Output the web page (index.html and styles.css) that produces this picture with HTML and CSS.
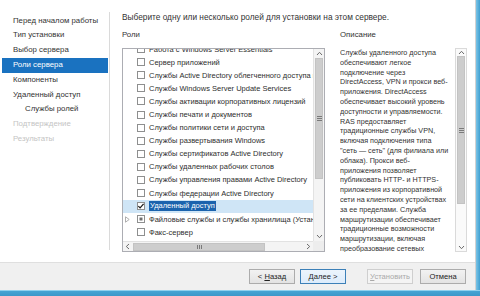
FILE: index.html
```html
<!DOCTYPE html>
<html lang="ru">
<head>
  <meta charset="UTF-8">
  <title>Мастер добавления ролей и компонентов</title>
  <link rel="stylesheet" href="styles.css">
</head>
<body>
<div class="window">
  <div class="frame">
    <div class="main">
      <!-- Steps -->
      <div class="steps">
        <div class="step">Перед началом работы</div>
        <div class="step">Тип установки</div>
        <div class="step">Выбор сервера</div>
        <div class="step active">Роли сервера</div>
        <div class="step">Компоненты</div>
        <div class="step">Удаленный доступ</div>
        <div class="step sub">Службы ролей</div>
        <div class="step disabled">Подтверждение</div>
        <div class="step disabled">Результаты</div>
      </div>

      <!-- Page -->
      <div class="content">
        <p class="intro">Выберите одну или несколько ролей для установки на этом сервере.</p>
        <div class="columns">
          <div class="roles">
            <div class="label">Роли</div>
            <div class="roles-box">
              <div class="roles-list">
                <div class="role first"><span class="check"></span><span class="name">Работа с Windows Server Essentials</span></div>
                <div class="role"><span class="check"></span><span class="name">Сервер приложений</span></div>
                <div class="role"><span class="check"></span><span class="name">Службы Active Directory облегченного доступа к каталогам</span></div>
                <div class="role"><span class="check"></span><span class="name">Службы Windows Server Update Services</span></div>
                <div class="role"><span class="check"></span><span class="name">Службы активации корпоративных лицензий</span></div>
                <div class="role"><span class="check"></span><span class="name">Службы печати и документов</span></div>
                <div class="role"><span class="check"></span><span class="name">Службы политики сети и доступа</span></div>
                <div class="role"><span class="check"></span><span class="name">Службы развертывания Windows</span></div>
                <div class="role"><span class="check"></span><span class="name">Службы сертификатов Active Directory</span></div>
                <div class="role"><span class="check"></span><span class="name">Службы удаленных рабочих столов</span></div>
                <div class="role"><span class="check"></span><span class="name">Службы управления правами Active Directory</span></div>
                <div class="role"><span class="check"></span><span class="name">Службы федерации Active Directory</span></div>
                <div class="role selected">
                  <span class="check">
                    <svg width="8" height="8" viewBox="0 0 8 8"><path d="M1.3 4.1 L3.1 5.9 L6.6 1.9" fill="none" stroke="#1e1e1e" stroke-width="1.3"/></svg>
                  </span>
                  <span class="name">Удаленный доступ</span>
                </div>
                <div class="role has-toggle">
                  <span class="toggle">
                    <svg width="5" height="7" viewBox="0 0 5 7"><path d="M0.5 0.8 L4.2 3.5 L0.5 6.2 Z" fill="none" stroke="#a6a6a6" stroke-width="0.9"/></svg>
                  </span>
                  <span class="check partial"></span><span class="name">Файловые службы и службы хранилища (Установлено: 1 из 12)</span>
                </div>
                <div class="role"><span class="check"></span><span class="name">Факс-сервер</span></div>
              </div>

              <div class="vscroll">
                <div class="sb-btn"><svg width="7" height="5" viewBox="0 0 7 5"><path d="M1 4 L3.5 1.3 L6 4" fill="none" stroke="#6b6b6b" stroke-width="1"/></svg></div>
                <div class="sb-track"><div class="sb-thumb roles-thumb"><span class="grip"></span></div></div>
                <div class="sb-btn down"><svg width="7" height="5" viewBox="0 0 7 5"><path d="M1 1 L3.5 3.7 L6 1" fill="none" stroke="#6b6b6b" stroke-width="1"/></svg></div>
              </div>
              <div class="hscroll">
                <div class="sb-btn"><svg width="5" height="7" viewBox="0 0 5 7"><path d="M4 1 L1.3 3.5 L4 6" fill="none" stroke="#6b6b6b" stroke-width="1"/></svg></div>
                <div class="sb-track"><div class="sb-thumb h-thumb"><span class="grip"></span></div></div>
                <div class="sb-btn right"><svg width="5" height="7" viewBox="0 0 5 7"><path d="M1 1 L3.7 3.5 L1 6" fill="none" stroke="#6b6b6b" stroke-width="1"/></svg></div>
              </div>
              <div class="corner"></div>
            </div>
          </div>

          <div class="desc">
            <div class="label">Описание</div>
            <div class="desc-box">
              <p class="desc-text">Службы удаленного доступа<br>обеспечивают легкое<br>подключение через<br>DirectAccess, VPN и прокси веб-<br>приложения. DirectAccess<br>обеспечивает высокий уровень<br>доступности и управляемости.<br>RAS предоставляет<br>традиционные службы VPN,<br>включая подключения типа<br>"сеть — сеть" (для филиала или<br>облака). Прокси веб-<br>приложения позволяет<br>публиковать HTTP- и HTTPS-<br>приложения из корпоративной<br>сети на клиентских устройствах<br>за ее пределами. Служба<br>маршрутизации обеспечивает<br>традиционные возможности<br>маршрутизации, включая<br>преобразование сетевых<br>адресов (NAT).</p>
              <div class="vscroll desc-scroll">
                <div class="sb-btn"><svg width="7" height="5" viewBox="0 0 7 5"><path d="M1 4 L3.5 1.3 L6 4" fill="none" stroke="#6b6b6b" stroke-width="1"/></svg></div>
                <div class="sb-track"><div class="sb-thumb desc-thumb"><span class="grip"></span></div></div>
                <div class="sb-btn down"><svg width="7" height="5" viewBox="0 0 7 5"><path d="M1 1 L3.5 3.7 L6 1" fill="none" stroke="#6b6b6b" stroke-width="1"/></svg></div>
              </div>
            </div>
          </div>
        </div>
      </div>
    </div>

    <!-- Buttons -->
    <div class="footer">
      <button class="btn">&lt; <u>Н</u>азад</button>
      <button class="btn default"><u>Д</u>алее &gt;</button>
      <button class="btn disabled"><u>У</u>становить</button>
      <button class="btn cancel">Отмена</button>
    </div>
  </div>
  <div class="frame-edge"></div>
</div>
<div class="frame-bottom"></div>
</body>
</html>
```

FILE: styles.css
```css
* {
  margin: 0;
  padding: 0;
  box-sizing: border-box;
}

body {
  width: 480px;
  height: 296px;
  overflow: hidden;
  background: #ffffff;
  font-family: 'Liberation Sans', Arial, sans-serif;
  color: #2b2b2b;
}

/* Window frame */
.window {
  display: flex;
  height: 290px;
}

.frame {
  flex: 1;
  display: flex;
  flex-direction: column;
  border-right: 1px solid #d2d2d2;
}

.frame-edge {
  width: 4px;
  background: linear-gradient(90deg, #7cc4e6, #3f9fd0);
}

.frame-bottom {
  height: 6px;
  background: linear-gradient(#8fd1ee 0, #8fd1ee 1px, #45a4d4 1px, #3b98c9);
}

.main {
  display: flex;
  height: 262px;
}

/* Steps */
.steps {
  width: 110px;
  height: 238px;
  margin-top: 12px;
  padding-top: 1.6px;
  border-right: 1px solid #dadada;
}

.step {
  height: 14.8px;
  line-height: 14.8px;
  margin: 0 1px 0 2px;
  padding-left: 11px;
  font-size: 7.8px;
  color: #333333;
  white-space: nowrap;
}

.step.active {
  background: #1a72c0;
  color: #ffffff;
}

.step.sub {
  padding-left: 23px;
}

.step.disabled {
  color: #c4c4c4;
}

/* Page */
.content {
  flex: 1;
  padding: 12px 0 0 12px;
}

.intro {
  font-size: 8.3px;
  line-height: 10px;
  color: #333333;
  white-space: nowrap;
}

.columns {
  display: flex;
  margin-top: 8px;
}

.label {
  height: 10px;
  line-height: 10px;
  margin-bottom: 8px;
  font-size: 7.8px;
  color: #333333;
}

.roles {
  width: 203px;
}

.roles-box {
  height: 204px;
  border: 1px solid #acadb3;
  display: grid;
  grid-template-columns: 1fr 11px;
  grid-template-rows: 1fr 10px;
}

.roles-list {
  overflow: hidden;
}

.role {
  height: 13.1px;
  display: flex;
  align-items: center;
  padding-left: 14px;
  font-size: 7.5px;
  white-space: nowrap;
  color: #2e2e2e;
}

.role.first {
  margin-top: -6.5px;
}

.role.has-toggle {
  padding-left: 0;
}

.toggle {
  flex: none;
  width: 14px;
  display: flex;
  align-items: center;
  padding-left: 2px;
}

.role.selected {
  background: #cfe5f6;
}

.role.selected .name {
  background: #1b63ad;
  color: #ffffff;
  padding: 0 1px;
  line-height: 10px;
}

.check {
  flex: none;
  width: 8px;
  height: 8px;
  margin-right: 4px;
  border: 1px solid #8e8f8f;
  background: #ffffff;
  display: flex;
  align-items: center;
  justify-content: center;
}

.check svg {
  flex: none;
}

.check.partial {
  background: #707070;
  box-shadow: inset 0 0 0 1.5px #ffffff;
}

/* Scrollbars */
.vscroll {
  display: flex;
  flex-direction: column;
  background: #f4f4f4;
  border-left: 1px solid #e2e2e2;
}

.hscroll {
  display: flex;
  background: #f4f4f4;
  border-top: 1px solid #e2e2e2;
}

.corner {
  background: #ededed;
}

.sb-btn {
  height: 9px;
  display: flex;
  align-items: center;
  justify-content: center;
}

.hscroll .sb-btn {
  width: 9px;
  height: auto;
}

.hscroll .sb-btn.right {
  width: 10px;
}

.sb-track {
  flex: 1;
}

.sb-thumb {
  background: #cdcdcd;
  border: 1px solid #c3c3c3;
  display: flex;
  align-items: center;
  justify-content: center;
}

.vscroll .sb-thumb {
  margin: 0 1px;
}

.roles-thumb {
  margin-top: 49px;
  height: 121px;
}

.h-thumb {
  margin: 1px 0 0 1px;
  width: 132px;
  height: 8px;
}

.grip {
  width: 5px;
  height: 5px;
  background: repeating-linear-gradient(#7a7a7a 0, #7a7a7a 1px, transparent 1px, transparent 2px);
}

.h-thumb .grip {
  width: 5px;
  height: 4px;
  background: repeating-linear-gradient(90deg, #7a7a7a 0, #7a7a7a 1px, transparent 1px, transparent 2px);
}

/* Description */
.desc {
  width: 127px;
  margin-left: 15px;
}

.desc-box {
  display: flex;
  height: 204px;
}

.desc-text {
  flex: 1;
  overflow: hidden;
  font-size: 7.2px;
  line-height: 9.8px;
  color: #333333;
  white-space: nowrap;
}

.desc-scroll {
  width: 12px;
  border: 1px solid #dadada;
  background: #fafafa;
}

.desc-scroll .sb-btn {
  height: 7px;
}

.desc-thumb {
  height: 148px;
}

/* Footer */
.footer {
  height: 28px;
  border-top: 1px solid #dfdfdf;
  background: #f0f0f0;
  display: flex;
  justify-content: flex-end;
  align-items: center;
  padding: 0 9px 0 0;
}

.btn {
  width: 46px;
  height: 15px;
  border: 1px solid #acacac;
  background: linear-gradient(#f2f2f2, #e3e3e3);
  font-family: 'Liberation Sans', Arial, sans-serif;
  font-size: 7.6px;
  color: #222222;
  margin-left: 5px;
}

.btn.default {
  border-color: #3c80b8;
  background: linear-gradient(#ecf4fc, #dcecfc);
}

.btn.disabled {
  margin-left: 21px;
  color: #a9a9a9;
  border-color: #cfcfcf;
  background: #f4f4f4;
}

.btn.cancel {
  margin-left: 7px;
}
```
